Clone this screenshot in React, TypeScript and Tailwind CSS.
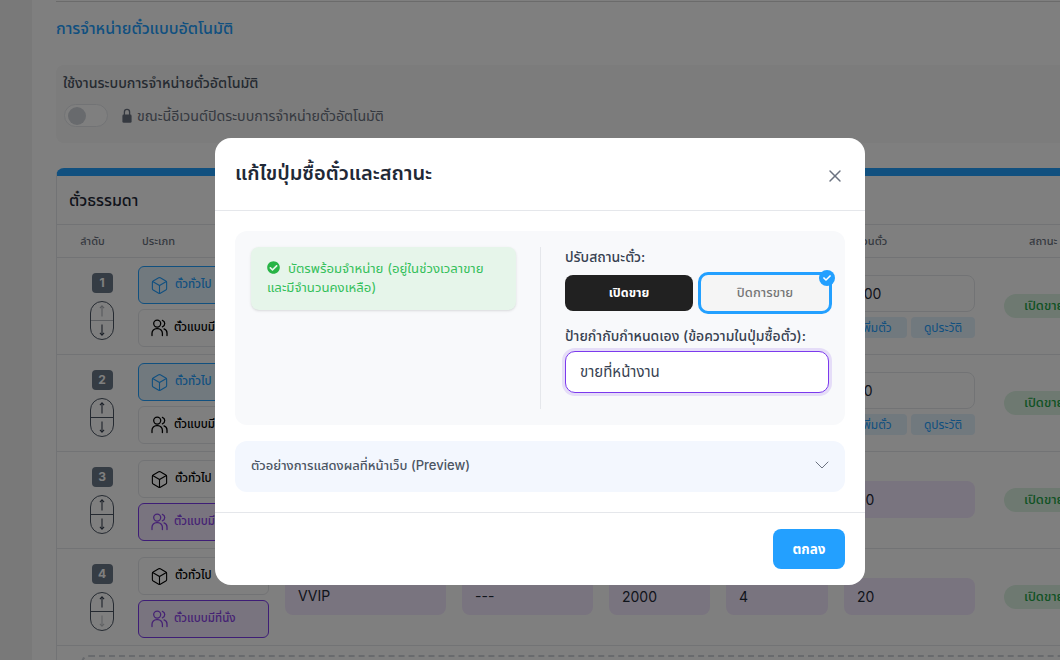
import { Box, X, ChevronDown } from "lucide-react";
import { FaCheckCircle, FaCheck } from "react-icons/fa";

const font = "font-['Inter','Noto_Sans','Noto_Sans_Thai',sans-serif]";

type RowProps = { n: number; first: "blue" | "plain"; second: "plain" | "purple"; qty: string; filled: boolean; upOff?: boolean; downOff?: boolean; name?: string; price?: string; left?: string; sold?: string };

function UsersIcon() {
  return (
    <svg width="17" height="18" viewBox="0 0 17 18" fill="none" stroke="currentColor" strokeWidth="1.3" strokeLinecap="round" className="ml-[1px] shrink-0">
      <circle cx="6.2" cy="4.6" r="3.5" />
      <path d="M11.4 1.3a3.5 3.5 0 0 1 0 6.6" />
      <path d="M1 16.6v-2.4a4.6 4.6 0 0 1 4.6-4.6h1.2a4.6 4.6 0 0 1 4.6 4.6v2.4" />
      <path d="M13 9.9a4.2 4.2 0 0 1 3 4v2.7" />
    </svg>
  );
}

function ArrowIcon({ down }: { down?: boolean }) {
  return (
    <svg width="6" height="12" viewBox="0 0 6 12" fill="none" stroke="currentColor" strokeWidth="1.1" className={down ? "rotate-180" : ""}>
      <path d="M3 11.6V0.9" />
      <path d="M0.9 3.1 3 0.9l2.1 2.2" />
    </svg>
  );
}

function TypeBtn({ kind, label, tone }: { kind: "box" | "users"; label: string; tone: "blue" | "purple" | "plain" }) {
  const cls =
    tone === "blue"
      ? "border-[#23a0ff] bg-[#e3f2fd] text-[#23a0ff]"
      : tone === "purple"
      ? "border-[#7c3aed] bg-[#f3e8ff] text-[#8b45e8]"
      : "border-[#e5e7eb] bg-white text-black";
  return (
    <div className={`flex h-[38px] w-[131px] shrink-0 items-center rounded-[6px] border px-[11px] text-[11.5px] font-medium ${cls}`}>
      {kind === "box" ? <Box size={19} strokeWidth={1.4} className="shrink-0" /> : <UsersIcon />}
      <span className="ml-[6px] whitespace-nowrap">{label}</span>
    </div>
  );
}

function Row({ n, first, second, qty, filled, upOff, downOff, name, price, left, sold }: RowProps) {
  const fieldTone = filled ? "bg-[#f3e8ff]" : "bg-white border border-[#e5e7eb]";
  const arrow = "flex h-[19px] items-center justify-center text-[#374151]";
  const field = `mt-[29px] flex h-[37px] shrink-0 items-center rounded-[8px] px-[13px] text-[14px] text-[#1f2937] ${fieldTone}`;
  return (
    <div className="flex h-[97px] shrink-0 items-start border-b border-[#e5e7eb]">
      <div className="flex w-[81px] shrink-0 flex-col items-center pt-[15px] pl-[9px]">
        <div className="flex h-[20px] w-[21px] items-center justify-center rounded-[4px] bg-[#6b7888] text-[12px] font-bold text-white">{n}</div>
        <div className="mt-[8px] flex h-[39px] w-[24px] flex-col rounded-[12px] border border-[#4b5563]">
          <div className={`${arrow} border-b border-[#4b5563] ${upOff ? "opacity-40" : ""}`}><ArrowIcon /></div>
          <div className={`${arrow} ${downOff ? "opacity-30" : ""}`}><ArrowIcon down /></div>
        </div>
      </div>
      <div className="flex w-[147px] shrink-0 flex-col gap-[5px] pt-[8px]">
        <TypeBtn kind="box" label="ตั๋วทั่วไป" tone={first} />
        <TypeBtn kind="users" label="ตั๋วแบบมีที่นั่ง" tone={second} />
      </div>
      <div className={`${field} w-[161px] pb-[3px]`}>{name}</div>
      <div className={`${field} ml-[16px] w-[131px] pb-[3px]`}>{price}</div>
      <div className={`${field} ml-[16px] w-[101px]`}>{left}</div>
      <div className={`${field} ml-[16px] w-[102px]`}>{sold}</div>
      <div className={`ml-[16px] flex w-[131px] shrink-0 flex-col gap-[5px] ${filled ? "mt-[29px]" : "mt-[17px]"}`}>
        <div className={`flex h-[37px] items-center rounded-[8px] px-[13px] text-[14px] text-[#1f2937] ${fieldTone}`}>{qty}</div>
        {!filled && (
          <div className="flex gap-[4px]">
            <div className="flex h-[21px] w-[63px] items-center justify-center rounded-[4px] bg-[#e3f2fd] text-[12px] text-[#23a0ff]">เพิ่มตั๋ว</div>
            <div className="flex h-[21px] w-[64px] items-center justify-center rounded-[4px] bg-[#e3f2fd] text-[12px] text-[#23a0ff]">ดูประวัติ</div>
          </div>
        )}
      </div>
      <div className="ml-[29px] mt-[36px] flex h-[24px] shrink-0 items-center rounded-full bg-[#dcf3e2] px-[20px] text-[13px] font-medium whitespace-nowrap text-[#22a447]">เปิดขาย</div>
    </div>
  );
}

export default function App() {
  return (
    <div className={`relative h-[660px] w-[1060px] overflow-hidden bg-white ${font}`}>
      {/* page */}
      <div className="flex h-full">
        <div className="w-[32px] shrink-0 bg-[#f2f2f2]" />
        <div className="flex min-w-0 flex-1 flex-col pl-[24px]">
          <div className="mt-px h-px w-[1100px] shrink-0 bg-[#d6d6d6]" />
          <h2 className="mt-[16px] h-[20px] text-[16px] leading-[20px] font-medium text-[#23a0ff]">การจำหน่ายตั๋วแบบอัตโนมัติ</h2>
          <div className="mt-[27px] h-[78px] w-[1100px] shrink-0 rounded-[8px] bg-[#f8f8f8] pt-[8px] pl-[7px]">
            <div className="text-[14.2px] leading-[20px] font-medium text-[#4b5563]">ใช้งานระบบการจำหน่ายตั๋วอัตโนมัติ</div>
            <div className="mt-[11px] flex h-[23px] items-center">
              <div className="ml-px flex h-[23px] w-[44px] items-center rounded-full border border-[#e5e7eb] bg-white pl-[3px]">
                <div className="h-[18px] w-[18px] rounded-full bg-[#d1d5db]" />
              </div>
              <svg width="10" height="15" viewBox="0 0 10 15" className="ml-[14px] text-[#6b7280]">
                <path d="M2.4 7V4a2.6 2.6 0 0 1 5.2 0v3" fill="none" stroke="currentColor" strokeWidth="1.3" />
                <rect x="0.4" y="6.5" width="9.2" height="8.3" rx="1.4" fill="currentColor" />
              </svg>
              <span className="ml-[5px] text-[14.2px] whitespace-nowrap text-[#6b7280]">ขณะนี้อีเวนต์ปิดระบบการจำหน่ายตั๋วอัตโนมัติ</span>
            </div>
          </div>
          <div className="mt-[25px] w-[1100px] shrink-0 rounded-t-[8px] border-x border-[#e5e7eb] border-t-[8px] border-t-[#23a0ff] bg-white">
            <div className="flex h-[49px] items-center border-b border-[#e5e7eb] pl-[12px] text-[16px] font-medium text-[#1f2937]">ตั๋วธรรมดา</div>
            <div className="flex h-[33px] items-center border-b border-[#e5e7eb] text-[11px] font-medium text-[#6b7280]">
              <div className="w-[70px] pl-[1px] text-center">ลำดับ</div>
              <div className="ml-[15px] w-[703px]">ประเภท</div>
              <div className="w-[66px]">จำนวนตั๋ว</div>
              <div className="ml-[118px]">สถานะ</div>
            </div>
            <Row n={1} first="blue" second="plain" qty="100" filled={false} upOff />
            <Row n={2} first="blue" second="plain" qty="10" filled={false} />
            <Row n={3} first="plain" second="purple" qty="20" filled />
            <Row n={4} first="plain" second="purple" qty="20" filled downOff name="VVIP" price="---" left="2000" sold="4" />
            <div className="mx-[24px] mt-[9px] h-[20px] rounded-t-[8px] border-x-2 border-t-2 border-dashed border-[#d1d5db]" />
          </div>
        </div>
      </div>

      {/* backdrop and dialog */}
      <div className="absolute inset-0 flex justify-center bg-black/50 pt-[138px] pl-[20px]">
        <div className="h-[447px] w-[650px] rounded-[16px] bg-white">
          <div className="flex h-[73px] items-center justify-between border-b border-[#e5e7eb] px-[20px]">
            <h3 className="-mt-[3px] text-[20px] font-semibold text-[#1f2937]">แก้ไขปุ่มซื้อตั๋วและสถานะ</h3>
            <X size={20} strokeWidth={1.75} className="mt-[3px] text-[#6b7280]" />
          </div>
          <div className="px-[20px] pt-[20px]">
            <div className="flex h-[194px] rounded-[12px] bg-[#f8f9fb] p-[16px]">
              <div className="w-[290px] shrink-0 border-r border-[#e5e7eb]">
                <div className="h-[63px] w-[265px] rounded-[8px] bg-[#e6f5ea] px-[16px] py-[12px] text-[13.2px] leading-[19px] text-[#34c05a] shadow-sm">
                  <FaCheckCircle size={13} className="mr-[8px] inline-block align-[-1px] text-[#28b446]" />
                  บัตรพร้อมจำหน่าย (อยู่ในช่วงเวลาขาย และมีจำนวนคงเหลือ)
                </div>
              </div>
              <div className="pl-[24px]">
                <div className="text-[14px] leading-[20px] font-medium text-[#374151]">ปรับสถานะตั๋ว:</div>
                <div className="mt-[5px] flex items-center gap-[5px]">
                  <div className="flex h-[36px] w-[128px] items-center justify-center rounded-[8px] bg-[#212121] text-[12.5px] font-bold text-white">เปิดขาย</div>
                  <div className="relative flex h-[42px] w-[134px] items-center justify-center rounded-[10px] border-[3px] border-[#23a0ff] bg-[#f5f5f5] text-[13px] font-medium text-[#757575]">
                    ปิดการขาย
                    <div className="absolute -top-[5px] -right-[6px] flex h-[16px] w-[16px] items-center justify-center rounded-full bg-[#23a0ff] text-white">
                      <FaCheck size={8} />
                    </div>
                  </div>
                </div>
                <div className="mt-[12px] text-[14px] leading-[20px] font-medium whitespace-nowrap text-[#374151]">ป้ายกำกับกำหนดเอง (ข้อความในปุ่มซื้อตั๋ว):</div>
                <div className="mt-[5px] flex h-[42px] w-[264px] items-center rounded-[10px] border-[1.5px] border-[#7c3aed] bg-white pl-[14px] text-[15px] text-[#374151] ring-[3px] ring-[#7c3aed]/15">ขายที่หน้างาน</div>
              </div>
            </div>
            <div className="mt-[16px] flex h-[51px] items-center justify-between rounded-[12px] bg-[#f3f7fe] pr-[11px] pl-[16px]">
              <span className="-mt-[2px] text-[13px] font-medium text-[#4b5563]">ตัวอย่างการแสดงผลที่หน้าเว็บ (Preview)</span>
              <ChevronDown size={24} strokeWidth={1} className="-mt-[3px] text-[#6b7280]" />
            </div>
          </div>
          <div className="mt-[20px] flex justify-end border-t border-[#e5e7eb] pt-[16px] pr-[20px]">
            <div className="flex h-[40px] w-[72px] items-center justify-center rounded-[8px] bg-[#23a0ff] text-[13.5px] font-bold text-white">ตกลง</div>
          </div>
        </div>
      </div>
    </div>
  );
}
